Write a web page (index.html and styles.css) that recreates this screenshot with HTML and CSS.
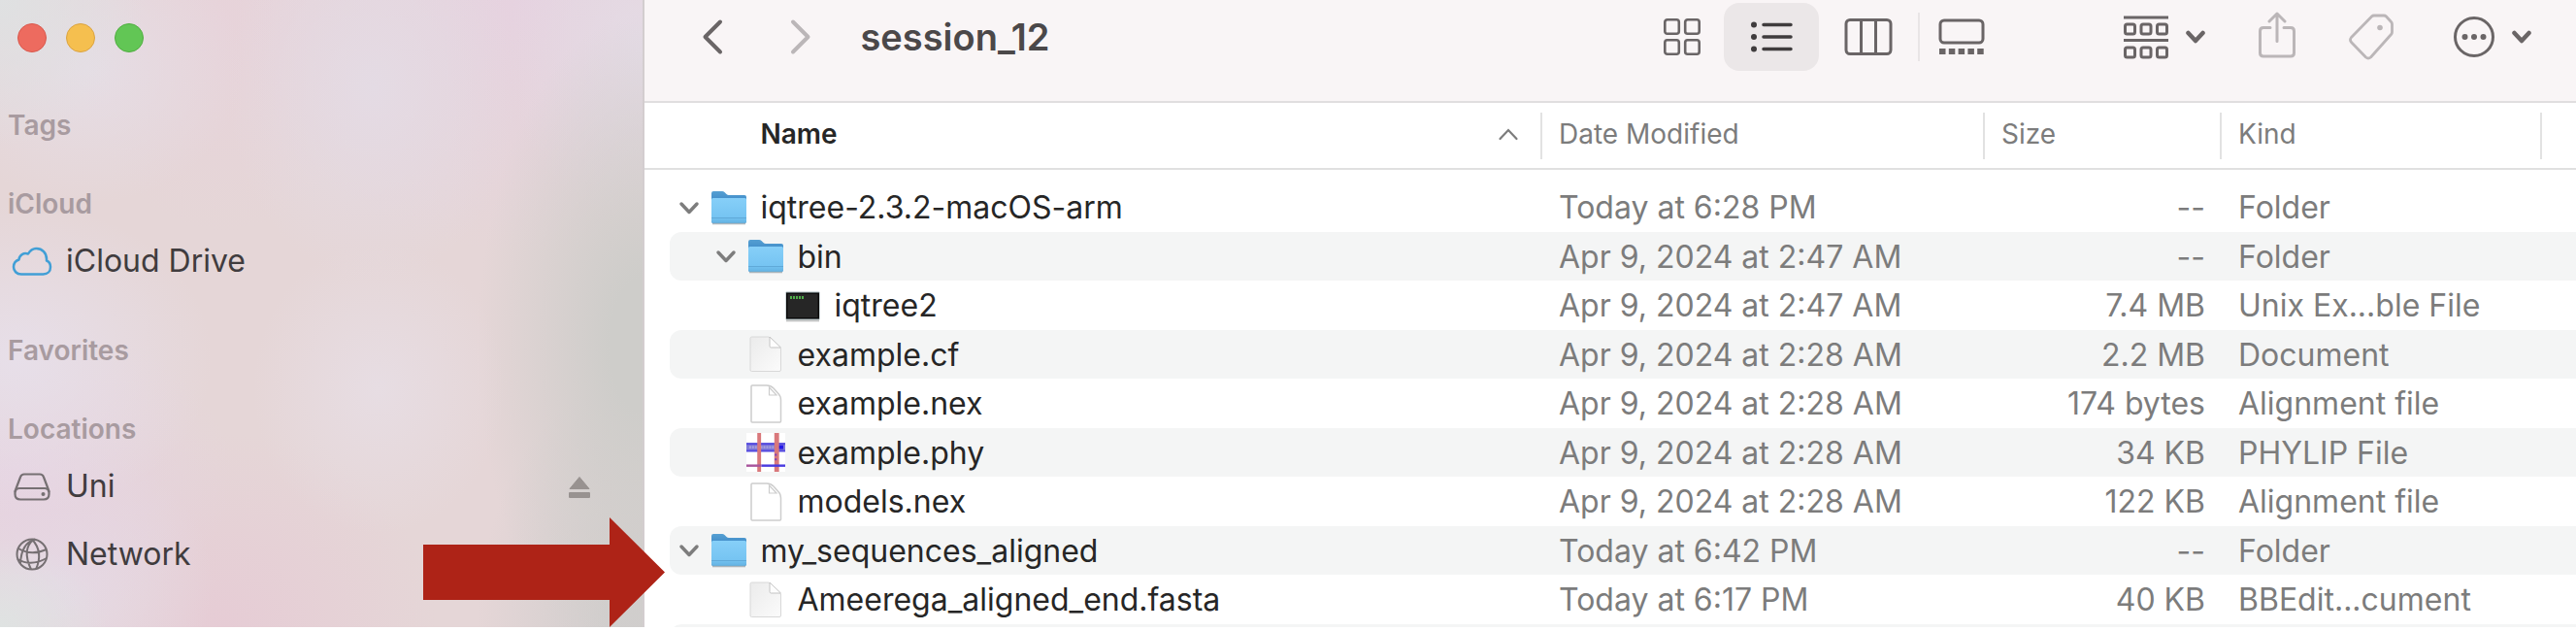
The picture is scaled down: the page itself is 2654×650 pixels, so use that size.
FILE: index.html
```html
<!DOCTYPE html>
<html lang="en">
<head>
<meta charset="utf-8">
<title>session_12</title>
<link rel="stylesheet" href="styles.css">
</head>
<body>
<svg width="0" height="0" class="sprite" aria-hidden="true">
  <defs>
    <linearGradient id="folderFront" x1="0" y1="0" x2="0" y2="1">
      <stop offset="0" stop-color="#86cff8"/><stop offset="0.75" stop-color="#76c4f2"/><stop offset="1" stop-color="#63b2e2"/>
    </linearGradient>
    <linearGradient id="folderBack" x1="0" y1="0" x2="0" y2="1">
      <stop offset="0" stop-color="#559fd2"/><stop offset="0.4" stop-color="#3a86c6"/>
    </linearGradient>
    <linearGradient id="paper" x1="0" y1="0" x2="1" y2="1">
      <stop offset="0" stop-color="#ebebeb"/><stop offset="1" stop-color="#fbfbfb"/>
    </linearGradient>
    <symbol id="folder" viewBox="0 0 40 42">
      <path d="M2 6q0-2 2-2h9q1.500 0 2.500 1l2 2q1 1 2.500 1h16q2 0 2 2v25q0 2-2 2H4q-2 0-2-2z" fill="url(#folderBack)"/>
      <path d="M2 12.500q0-1.500 1.500-1.500h33q1.500 0 1.500 1.500V35q0 2-2 2H4q-2 0-2-2z" fill="url(#folderFront)"/>
      <path d="M2 31.500h36" stroke="#5fa9d8" stroke-width="1"/>
      <path d="M3 37.500h34" stroke="#8c9aa3" stroke-width="1.500" opacity=".7"/>
    </symbol>
    <symbol id="doc" viewBox="0 0 40 42">
      <path d="M5.500 3h17.500l12.500 12V37q0 1.500-1.500 1.500H5.500Q4 38.500 4 37V4.500Q4 3 5.500 3z" fill="url(#paper)" stroke="#d8d8d8" stroke-width="1"/>
      <path d="M24 3v9.500q0 1.500 1.500 1.500h10z" fill="#fdfdfd" stroke="#c4c4c4" stroke-width="1"/>
    </symbol>
    <symbol id="page" viewBox="0 0 40 42">
      <path d="M6 2h15q4 0 7 3l4.500 5q3 3 3 7v22q0 1-1 1H6q-1 0-1-1V3q0-1 1-1z" fill="#fff" stroke="#cdcdcd" stroke-width="1.500"/>
      <path d="M23.500 4v8h7.500z" fill="#fff" stroke="#cdcdcd" stroke-width="1.200"/>
    </symbol>
    <symbol id="terminal" viewBox="0 0 40 42">
      <rect x="2.500" y="6.500" width="35" height="29" rx="1" fill="#9fb0b4"/>
      <rect x="3" y="7.500" width="34" height="27" fill="#0c0c0c"/>
      <rect x="4.500" y="9" width="31" height="24" fill="#262626"/>
      <path d="M7 12.500h14" stroke="#4fae4a" stroke-width="3" stroke-dasharray="2 1"/>
      <path d="M3 36.500h34" stroke="#bdbdbd" stroke-width="1.500"/>
    </symbol>
    <symbol id="phylip" viewBox="0 0 41 41">
      <rect width="41" height="41" fill="#fff"/>
      <rect y="10.500" width="41" height="9" fill="#7f7ada"/>
      <path d="M0 11.500h41M0 19h41" stroke="#5349e0" stroke-width="2"/>
      <path d="M3 15h30" stroke="#a39ddb" stroke-width="3" stroke-dasharray="2 1"/>
      <rect x="34" y="13" width="5" height="4" fill="#2418e8"/>
      <path d="M13.500 0v41" stroke="#d9787b" stroke-width="4"/>
      <path d="M32 0v41" stroke="#d9787b" stroke-width="5"/>
      <path d="M0 34.500h16" stroke="#a8559c" stroke-width="2.500"/>
      <path d="M16 34.500h25" stroke="#4a3be0" stroke-width="2.500"/>
      <path d="M31 22v9" stroke="#7a3dbb" stroke-width="2" stroke-dasharray="2 3"/>
    </symbol>
    <symbol id="disclosure" viewBox="0 0 24 16">
      <path d="M4 4l8 8.500L20 4" fill="none" stroke="#7d7d7d" stroke-width="3.500" stroke-linecap="round" stroke-linejoin="round"/>
    </symbol>
    <symbol id="caret" viewBox="0 0 20 14">
      <path d="M2.500 3l7.500 8 7.500-8" fill="none" stroke="#6a6566" stroke-width="4.500" stroke-linecap="round" stroke-linejoin="round"/>
    </symbol>
  </defs>
</svg>

<div class="window">
  <aside class="sidebar">
    <div class="lights">
      <button class="light light-close" aria-label="Close"></button>
      <button class="light light-minimize" aria-label="Minimize"></button>
      <button class="light light-zoom" aria-label="Zoom"></button>
    </div>
    <nav class="places">
      <section><h2>Tags</h2></section>
      <section>
        <h2>iCloud</h2>
        <a class="place" href="#icloud">
          <svg class="place-icon" viewBox="0 0 42 42"><path d="M10 34.500C5 34.500 2 31 2 27c0-4 2.500-6.500 5.500-7.500C8 14.500 12.500 12 17 13.500C19 10 22 8 25.500 8c6 0 10.500 4.500 10.500 11v1.500c2.500 1 4 3.500 4 6.500 0 4.500-3 7.500-7.500 7.500z" fill="none" stroke="#419fd6" stroke-width="2.500" stroke-linejoin="round"/></svg>
          <span>iCloud Drive</span>
        </a>
      </section>
      <section><h2>Favorites</h2></section>
      <section>
        <h2>Locations</h2>
        <div class="place-row">
          <a class="place" href="#uni">
            <svg class="place-icon" viewBox="0 0 42 42"><g fill="none" stroke="#767073" stroke-width="2.200" stroke-linejoin="round"><path d="M3.500 26L9 11.500Q10 8.500 13 8.500h16q3 0 4 3L38.500 26v3q0 5.500-5.500 5.500H9q-5.500 0-5.500-5.500z"/><path d="M3.500 27q1-4 4.500-4h26q3.500 0 4.500 4"/></g><circle cx="32.500" cy="29" r="2" fill="#767073"/></svg>
            <span>Uni</span>
          </a>
          <button class="eject" aria-label="Eject Uni">
            <svg width="22" height="24" viewBox="0 0 22 24"><path d="M11 1.500l10 12H1z" fill="#989290" stroke="#989290" stroke-linejoin="round"/><rect y="17" width="22" height="6" rx="1" fill="#989290"/></svg>
          </button>
        </div>
        <a class="place" href="#network">
          <svg class="place-icon" viewBox="0 0 42 42"><g fill="none" stroke="#767073" stroke-width="2"><circle cx="21" cy="21" r="15.500"/><path d="M7 15q13 8 29 1M6 26q14 8 30-1M23 5.500q-13 10-3 31M21 5.500q12 13 4 31M24 5.500q-14 4-15 25"/></g></svg>
          <span>Network</span>
        </a>
      </section>
    </nav>
    <svg class="pointer" width="249" height="113" viewBox="0 0 249 113" aria-hidden="true"><path d="M0 28h192V0l57 56.500L192 113V85H0z" fill="#ae2317"/></svg>
  </aside>

  <main class="content">
    <header class="toolbar">
      <div class="history">
        <button class="tool" aria-label="Back"><svg width="24" height="40" viewBox="0 0 24 40"><path d="M20 4.500L4.500 20 20 35.500" fill="none" stroke="#6a6566" stroke-width="4" stroke-linecap="round" stroke-linejoin="round"/></svg></button>
        <button class="tool" aria-label="Forward"><svg width="24" height="40" viewBox="0 0 24 40"><path d="M4 4.500L19.500 20 4 35.500" fill="none" stroke="#bbb6b8" stroke-width="4" stroke-linecap="round" stroke-linejoin="round"/></svg></button>
      </div>
      <h1>session_12</h1>
      <div class="views">
        <button class="tool view-end" aria-label="Icon view"><svg width="40" height="40" viewBox="0 0 40 40"><g fill="none" stroke="#6a6566" stroke-width="2.600"><rect x="2.300" y="2.300" width="14.500" height="14.500" rx="2.500"/><rect x="23.200" y="2.300" width="14.500" height="14.500" rx="2.500"/><rect x="2.300" y="23.200" width="14.500" height="14.500" rx="2.500"/><rect x="23.200" y="23.200" width="14.500" height="14.500" rx="2.500"/></g></svg></button>
        <button class="tool view-mid selected" aria-label="List view" aria-pressed="true"><svg width="44" height="40" viewBox="0 0 44 40"><path d="M14 7.500h28M14 20h28M14 32.500h28" stroke="#3f3c3d" stroke-width="3.500" stroke-linecap="round"/><g fill="#3f3c3d"><circle cx="4" cy="7.500" r="3"/><circle cx="4" cy="20" r="3"/><circle cx="4" cy="32.500" r="3"/></g></svg></button>
        <button class="tool view-mid" aria-label="Column view"><svg width="50" height="40" viewBox="0 0 50 40"><g fill="none" stroke="#6a6566" stroke-width="3"><rect x="2" y="2.500" width="46" height="35" rx="4"/><path d="M17.500 2.500v35M32.500 2.500v35"/></g></svg></button>
        <span class="divider"></span>
        <button class="tool view-end" aria-label="Gallery view"><svg width="48" height="40" viewBox="0 0 48 40"><rect x="2" y="3" width="44" height="23" rx="4" fill="none" stroke="#6a6566" stroke-width="3"/><path d="M1 35h46" stroke="#6a6566" stroke-width="6" stroke-dasharray="6.500 3.300"/></svg></button>
      </div>
      <div class="actions">
        <button class="tool menu" aria-label="Group items"><svg width="46" height="46" viewBox="0 0 46 46"><g fill="none" stroke="#6a6566" stroke-width="3"><path d="M0 3h46M0 26.500h46" stroke-width="2.800"/><rect x="1.500" y="10" width="10" height="10" rx="2"/><rect x="18" y="10" width="10" height="10" rx="2"/><rect x="34.500" y="10" width="10" height="10" rx="2"/><rect x="1.500" y="34" width="10" height="10" rx="2"/><rect x="18" y="34" width="10" height="10" rx="2"/><rect x="34.500" y="34" width="10" height="10" rx="2"/></g></svg><svg width="20" height="14"><use href="#caret"/></svg></button>
        <button class="tool share" aria-label="Share"><svg width="40" height="52" viewBox="0 0 40 52"><g fill="none" stroke="#bbb6b8" stroke-width="3" stroke-linecap="round" stroke-linejoin="round"><path d="M13 16.500H6q-3.500 0-3.500 3.500V42.500q0 3.500 3.500 3.500h28q3.500 0 3.500-3.500V20q0-3.500-3.500-3.500h-7M20 30.500V2.500M12 10l8-8 8 8"/></g></svg></button>
        <button class="tool" aria-label="Edit tags"><svg width="46" height="48" viewBox="0 0 46 48"><path d="M26 2h10q1.500 0 2.500 1l5 5.500q1 1 1 2.500v8q0 1.500-1 2.500L22.500 45q-2.500 2-5 0L2.500 29.500q-2-2.500 0-5L23.500 3q1-1 2.500-1z" fill="none" stroke="#bbb6b8" stroke-width="2.800" stroke-linejoin="round"/><circle cx="32" cy="14.500" r="2.800" fill="#bbb6b8"/></svg></button>
        <button class="tool menu more" aria-label="More"><svg width="42" height="44" viewBox="0 0 42 44"><circle cx="21" cy="22" r="19.500" fill="none" stroke="#6a6566" stroke-width="3"/><g fill="#6a6566"><circle cx="11.500" cy="22" r="3"/><circle cx="21" cy="22" r="3"/><circle cx="30.500" cy="22" r="3"/></g></svg><svg width="20" height="14"><use href="#caret"/></svg></button>
      </div>
    </header>

    <table class="files">
      <colgroup><col><col class="col-date"><col class="col-size"><col class="col-kind"><col class="col-rest"></colgroup>
      <thead>
        <tr>
          <th aria-sort="ascending"><button class="sort sort-name">Name<svg width="22" height="14" viewBox="0 0 22 14"><path d="M2.500 12L11 3l8.500 9" fill="none" stroke="#7c7c7c" stroke-width="2.200" stroke-linecap="round"/></svg></button></th>
          <th><button class="sort">Date Modified</button></th>
          <th><button class="sort">Size</button></th>
          <th><button class="sort">Kind</button></th>
          <th><span class="sort"></span></th>
        </tr>
      </thead>
      <tbody>
        <tr><td><div class="name"><button class="toggle" aria-label="Collapse"><svg width="24" height="16"><use href="#disclosure"/></svg></button><svg class="file-icon"><use href="#folder"/></svg>iqtree-2.3.2-macOS-arm</div></td><td>Today at 6:28 PM</td><td>--</td><td>Folder</td><td></td></tr>
        <tr><td><div class="name depth-1"><button class="toggle" aria-label="Collapse"><svg width="24" height="16"><use href="#disclosure"/></svg></button><svg class="file-icon"><use href="#folder"/></svg>bin</div></td><td>Apr 9, 2024 at 2:47 AM</td><td>--</td><td>Folder</td><td></td></tr>
        <tr><td><div class="name depth-2"><span class="toggle"></span><svg class="file-icon"><use href="#terminal"/></svg>iqtree2</div></td><td>Apr 9, 2024 at 2:47 AM</td><td>7.4 MB</td><td>Unix Ex...ble File</td><td></td></tr>
        <tr><td><div class="name depth-1"><span class="toggle"></span><svg class="file-icon"><use href="#doc"/></svg>example.cf</div></td><td>Apr 9, 2024 at 2:28 AM</td><td>2.2 MB</td><td>Document</td><td></td></tr>
        <tr><td><div class="name depth-1"><span class="toggle"></span><svg class="file-icon"><use href="#page"/></svg>example.nex</div></td><td>Apr 9, 2024 at 2:28 AM</td><td>174 bytes</td><td>Alignment file</td><td></td></tr>
        <tr><td><div class="name depth-1"><span class="toggle"></span><svg class="file-icon"><use href="#phylip"/></svg>example.phy</div></td><td>Apr 9, 2024 at 2:28 AM</td><td>34 KB</td><td>PHYLIP File</td><td></td></tr>
        <tr><td><div class="name depth-1"><span class="toggle"></span><svg class="file-icon"><use href="#page"/></svg>models.nex</div></td><td>Apr 9, 2024 at 2:28 AM</td><td>122 KB</td><td>Alignment file</td><td></td></tr>
        <tr><td><div class="name"><button class="toggle" aria-label="Collapse"><svg width="24" height="16"><use href="#disclosure"/></svg></button><svg class="file-icon"><use href="#folder"/></svg>my_sequences_aligned</div></td><td>Today at 6:42 PM</td><td>--</td><td>Folder</td><td></td></tr>
        <tr><td><div class="name depth-1"><span class="toggle"></span><svg class="file-icon"><use href="#doc"/></svg>Ameerega_aligned_end.fasta</div></td><td>Today at 6:17 PM</td><td>40 KB</td><td>BBEdit...cument</td><td></td></tr>
        <tr><td></td><td></td><td></td><td></td><td></td></tr>
      </tbody>
    </table>
  </main>
</div>
</body>
</html>
```

FILE: styles.css
```css
* { box-sizing: border-box; }

body {
  margin: 0;
  background: #fff;
  color: #262626;
  font-family: Inter, "Liberation Sans", sans-serif;
  font-size: 32px;
}

button {
  margin: 0;
  padding: 0;
  border: 0;
  background: none;
  color: inherit;
  font: inherit;
}

svg { display: block; flex: none; }
.sprite { position: absolute; }

.window {
  display: flex;
  height: calc(100vh - 4px);
  overflow: hidden;
}

/* Sidebar */
.sidebar {
  position: relative;
  z-index: 1;
  flex: none;
  width: 25%;
  border-right: 2px solid #d3cdcf;
  background:
    radial-gradient(ellipse 150px 150px at 0 0, #dfe1e2, transparent),
    radial-gradient(ellipse 110px 90px at 0 100%, #dfe3e2, transparent),
    radial-gradient(ellipse 150px 200px at 385px 90px, #e4dbe4, transparent),
    radial-gradient(ellipse 130px 150px at 390px 400px, #e7dde3, transparent),
    radial-gradient(ellipse 170px 340px at 100% 55%, #cecdca 20%, transparent),
    radial-gradient(ellipse 170px 260px at 100% 100%, #d1cecd 20%, transparent),
    radial-gradient(ellipse 140px 180px at 100% 50px, #e4dbe5, transparent),
    radial-gradient(ellipse 300px 260px at 540px 0, #e6d2e0, transparent),
    radial-gradient(ellipse 160px 140px at 90px 70px, #e6dde5, transparent),
    radial-gradient(ellipse 200px 160px at 20px 370px, #e7dfe9, transparent),
    radial-gradient(ellipse 220px 160px at 20px 490px, #e6d3e1, transparent),
    radial-gradient(ellipse 160px 140px at 60px 600px, #e5dbe6, transparent),
    radial-gradient(ellipse 220px 200px at 230px 100%, #e6ccd5, transparent),
    radial-gradient(ellipse 160px 220px at 230px 20px, #e7d3da, transparent),
    #e5d6d7;
}

.lights {
  display: flex;
  gap: 20px;
  padding: 24px 18px 0;
}

.light {
  width: 30px;
  height: 30px;
  border: 1px solid #d9584c;
  border-radius: 50%;
  background: #ed6b5f;
}
.light-minimize { border-color: #dba340; background: #f5bf4f; }
.light-zoom { border-color: #50ae40; background: #62c655; }

.places {
  display: flex;
  flex-direction: column;
  gap: 32px;
  padding-top: 51px;
}

.places h2 {
  margin: 0;
  padding-left: 8px;
  color: #a89ba0;
  font-size: 28px;
  font-weight: 600;
  line-height: 49px;
}

.place {
  display: flex;
  flex: 1;
  align-items: center;
  gap: 14px;
  height: 70px;
  padding: 0 0 3px 12px;
  color: #403c3e;
  text-decoration: none;
}
.place-icon { width: 42px; height: 42px; }
.place-row { display: flex; align-items: center; }
.eject { margin-right: 54px; }

.pointer {
  position: absolute;
  right: -23px;
  bottom: 0;
}

/* Toolbar */
.content { flex: 1; min-width: 0; }

.toolbar {
  display: flex;
  align-items: flex-start;
  height: 106px;
  padding: 3px 46px 0 58px;
  border-bottom: 2px solid #e0dedf;
  background: #f9f5f6;
}

.tool {
  display: flex;
  align-items: center;
  justify-content: center;
  height: 70px;
}

.history { display: flex; gap: 67px; }

.toolbar h1 {
  flex: 1;
  margin: 0;
  padding-left: 50px;
  color: #4b4849;
  font-size: 38px;
  font-weight: 600;
  line-height: 70px;
}

.views {
  display: flex;
  align-items: center;
  gap: 2px;
  margin-right: 126px;
}
.view-end { width: 82px; }
.view-mid { width: 98px; }
.selected { border-radius: 16px; background: #ebe7e8; }
.divider { width: 2px; height: 50px; background: #e9e5e6; }

.actions { display: flex; gap: 50px; }
.menu { gap: 18px; }
.share { width: 48px; }
.more { padding-left: 12px; }

/* File list */
.files {
  width: 100%;
  border-spacing: 0;
  table-layout: fixed;
  white-space: nowrap;
}
.col-date { width: 456px; }
.col-size { width: 244px; }
.col-kind { width: 330px; }
.col-rest { width: 37px; }

.files th {
  height: 69px;
  padding: 0;
  border-bottom: 2px solid #e0e0e0;
}

.sort {
  display: flex;
  align-items: center;
  width: 100%;
  height: 48px;
  padding: 0 0 3px 17px;
  border-left: 2px solid #e2e2e2;
  color: #7c7c7c;
  font-size: 28px;
  font-weight: 400;
}
.sort-name {
  justify-content: space-between;
  padding: 0 22px 3px 120px;
  border-left: 0;
  color: #262626;
  font-weight: 600;
}

.files tbody::before {
  content: "";
  display: block;
  height: 13px;
}

.files td {
  height: 51px;
  padding: 0 0 0 19px;
  color: #7c7c7c;
}
.files td:first-child {
  padding: 0;
  border-left: 26px solid transparent;
  border-radius: 38px 0 0 38px / 12px 0 0 12px;
  background-clip: padding-box;
  color: #262626;
}
.files td:nth-child(3) { padding: 0 15px 0 0; text-align: right; }
.files tr:nth-child(even) td { height: 50px; background-color: #f4f5f5; }

.name { display: flex; align-items: center; }
.depth-1 { padding-left: 38px; }
.depth-2 { padding-left: 76px; }
.toggle { display: flex; justify-content: center; width: 41px; }
.file-icon { width: 40px; height: 42px; margin-right: 13px; }
```
